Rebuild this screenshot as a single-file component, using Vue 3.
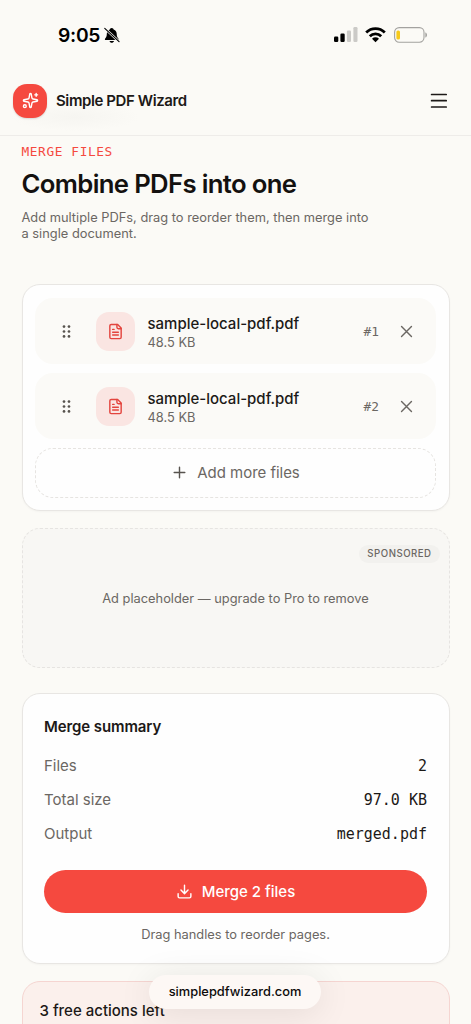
<script setup>
const files = [
  { id: 1, name: 'sample-local-pdf.pdf', size: '48.5 KB' },
  { id: 2, name: 'sample-local-pdf.pdf', size: '48.5 KB' },
]
const summary = [
  { label: 'Files', value: '2' },
  { label: 'Total size', value: '97.0 KB' },
  { label: 'Output', value: 'merged.pdf' },
]
</script>

<template>
  <div class="screen">
    <header class="top">
      <div class="status">
        <div class="time">
          <span>9:05</span>
          <svg class="bell" width="16" height="17" viewBox="0 0 17 18">
            <path d="M8.2 1C6.9 1 6.3 1.8 6.2 2.5C3.9 3.2 3 5 3 7.2C3 10 2.2 11.2 1.1 12.4C.7 13.2 1 13.8 1.8 13.8H14.7C15.5 13.8 15.8 13.2 15.4 12.4C14.2 11.2 13.5 10 13.5 7.2C13.5 5 12.5 3.2 10.2 2.5C10.1 1.8 9.5 1 8.2 1ZM5.8 14.8C6.2 16.1 7.1 16.7 8.2 16.7S10.3 16.1 10.7 14.8Z" fill="#000" />
            <path d="M.8 1.4L16 15.6" stroke="#fbfaf6" stroke-width="2.6" />
            <path d="M.8 1.4L16 15.6" stroke="#000" stroke-width="1.2" stroke-linecap="round" />
          </svg>
        </div>
        <div class="signals">
          <svg width="24" height="16" viewBox="0 0 24 16">
            <rect x="0" y="9.5" width="4.3" height="5.5" rx="1.2" />
            <rect x="6.4" y="6.5" width="4.3" height="8.5" rx="1.2" />
            <rect x="12.9" y="3.5" width="4.1" height="11.5" rx="1.2" fill="#cbcac7" />
            <rect x="19.4" y="0" width="4.1" height="15" rx="1.2" fill="#cbcac7" />
          </svg>
          <svg class="wifi" width="21" height="16" viewBox="0 0 21 16" fill="none" stroke="#000" stroke-width="2.8">
            <path d="M1.2 5.4C6.4.3 14.6.3 19.8 5.4" />
            <path d="M4.8 9.2C8 6 13 6 16.2 9.2" />
            <path d="M7 11.7C9 9.9 12 9.9 14 11.7L10.5 15.2Z" fill="#000" stroke="none" />
          </svg>
          <svg class="battery" width="34" height="16" viewBox="0 0 34 16">
            <rect x=".6" y=".6" width="29.4" height="14.6" rx="4.6" fill="none" stroke="#a3a29f" stroke-width="1.1" />
            <rect x="2.4" y="3.4" width="3.6" height="9" rx="1.5" fill="#f7ca1a" />
            <path d="M31.3 5.4C33.6 6 33.6 9.8 31.3 10.4Z" fill="#a3a29f" />
          </svg>
        </div>
      </div>
      <div class="nav">
        <div class="logo">
          <svg width="17" height="17" viewBox="0 0 24 24" fill="none" stroke="#fff" stroke-width="2" stroke-linecap="round" stroke-linejoin="round">
            <path d="M11.017 2.814a1 1 0 0 1 1.966 0l1.051 5.558a2 2 0 0 0 1.594 1.594l5.558 1.051a1 1 0 0 1 0 1.966l-5.558 1.051a2 2 0 0 0-1.594 1.594l-1.051 5.558a1 1 0 0 1-1.966 0l-1.051-5.558a2 2 0 0 0-1.594-1.594l-5.558-1.051a1 1 0 0 1 0-1.966l5.558-1.051a2 2 0 0 0 1.594-1.594z" />
            <path d="M20 2v4M22 4h-4" />
            <circle cx="4" cy="20" r="2" />
          </svg>
        </div>
        <span class="brand">Simple PDF Wizard</span>
        <svg class="menu" width="22" height="22" viewBox="0 0 22 22" fill="none" stroke="#1c1917" stroke-width="1.7" stroke-linecap="round">
          <path d="M3.6 4.5h14.6M3.6 10.7h14.6M3.6 17h14.6" />
        </svg>
      </div>
    </header>

    <main>
      <p class="eyebrow">MERGE FILES</p>
      <h1>Combine PDFs into one</h1>
      <p class="lead">Add multiple PDFs, drag to reorder them, then merge into<br />a single document.</p>

      <section class="card list">
        <div v-for="file in files" :key="file.id" class="file">
          <svg class="grip" width="17" height="17" viewBox="0 0 24 24" fill="#57534e">
            <circle cx="8.5" cy="5" r="1.9" /><circle cx="15.5" cy="5" r="1.9" />
            <circle cx="8.5" cy="12" r="1.9" /><circle cx="15.5" cy="12" r="1.9" />
            <circle cx="8.5" cy="19" r="1.9" /><circle cx="15.5" cy="19" r="1.9" />
          </svg>
          <div class="thumb">
            <svg width="17" height="17" viewBox="0 0 24 24" fill="none" stroke="#e3453e" stroke-width="2" stroke-linecap="round" stroke-linejoin="round">
              <path d="M15 2H6a2 2 0 0 0-2 2v16a2 2 0 0 0 2 2h12a2 2 0 0 0 2-2V7Z" />
              <path d="M14 2v4a2 2 0 0 0 2 2h4M10 9H8M16 13H8M16 17H8" />
            </svg>
          </div>
          <div class="info">
            <div class="name">{{ file.name }}</div>
            <div class="size">{{ file.size }}</div>
          </div>
          <span class="index">#{{ file.id }}</span>
          <svg class="remove" width="17" height="17" viewBox="0 0 24 24" fill="none" stroke="#6b6763" stroke-width="2" stroke-linecap="round">
            <path d="M5 5l14 14M19 5L5 19" />
          </svg>
        </div>
        <div class="add">
          <svg width="17" height="17" viewBox="0 0 24 24" fill="none" stroke="#57534e" stroke-width="2" stroke-linecap="round">
            <path d="M4.5 12h15M12 4.5v15" />
          </svg>
          <span>Add more files</span>
        </div>
      </section>

      <section class="ad">
        <span class="tag">SPONSORED</span>
        <span class="adtext">Ad placeholder — upgrade to Pro to remove</span>
      </section>

      <section class="card summary">
        <h2>Merge summary</h2>
        <div v-for="row in summary" :key="row.label" class="row">
          <span>{{ row.label }}</span>
          <span class="value">{{ row.value }}</span>
        </div>
        <div class="merge">
          <svg width="17" height="17" viewBox="0 0 24 24" fill="none" stroke="#fff" stroke-width="2" stroke-linecap="round" stroke-linejoin="round">
            <path d="M12 15V3M7 10l5 5 5-5M21 15v4a2 2 0 0 1-2 2H5a2 2 0 0 1-2-2v-4" />
          </svg>
          <span>Merge 2 files</span>
        </div>
        <p class="hint">Drag handles to reorder pages.</p>
      </section>

      <section class="quota">3 free actions left</section>
    </main>

    <div class="address">simplepdfwizard.com</div>
  </div>
</template>

<style>
body { margin: 0; background: #fbfaf6; }
</style>

<style scoped>
* { box-sizing: border-box; margin: 0; }
svg { display: block; flex: none; }
.screen {
  position: relative;
  height: 1024px;
  overflow: hidden;
  background: #fbfaf6;
  color: #1c1917;
  font-family: Inter, "Liberation Sans", sans-serif;
  font-size: 15px;
}
.top { height: 136px; border-bottom: 1px solid #eeece9; background: radial-gradient(ellipse 65px 14px at 75px 117px, #f6f5f1, #fbfaf6); }
.status { height: 68px; display: flex; justify-content: space-between; padding: 24px 43px 0 58px; }
.time { display: flex; height: 22px; align-items: center; gap: 4px; color: #000; font-size: 19.3px; font-weight: 600; letter-spacing: -0.3px; }
.signals { display: flex; height: 21px; align-items: center; }
.wifi { margin-left: 7.5px; }
.battery { margin-left: 8px; }
.nav { height: 65px; display: flex; align-items: center; padding: 0 21px 0 13px; }
.logo { width: 34px; height: 34px; border-radius: 14px; background: #f5493f; display: grid; place-items: center; box-shadow: 0 1px 2px #0002; }
.brand { flex: 1; margin-left: 9px; font-weight: 600; letter-spacing: -0.4px; }
main { padding: 0 21.5px; }
.eyebrow { padding-top: 7px; font: 12.8px/17px "DejaVu Sans Mono", monospace; letter-spacing: 0.6px; color: #f5493f; }
h1 { margin-top: 7px; font-size: 25.7px; line-height: 34px; font-weight: 600; letter-spacing: -0.65px; color: #14110f; }
.lead { margin-top: 9px; font-size: 12.85px; line-height: 16px; color: #6b6763; }
.card { border: 1px solid #e8e6e3; border-radius: 18px; background: #fefefe; box-shadow: 0 1px 2px #00000008; }
.list { margin-top: 42px; height: 227px; padding: 12.5px; display: flex; flex-direction: column; gap: 8.5px; }
.file { height: 66.5px; flex: none; border-radius: 18px; background: #fbfaf7; display: flex; align-items: center; padding: 1px 21px 0 22.5px; }
.thumb { width: 39px; height: 39px; margin-left: 21px; border-radius: 13px; background: #fae5e2; display: grid; place-items: center; }
.info { flex: 1; margin-left: 13px; }
.name { font-weight: 500; line-height: 20px; margin-top: 3px; }
.size { font-size: 12.85px; line-height: 17px; color: #6b6763; }
.index { font: 12.85px "DejaVu Sans Mono", monospace; color: #6b6763; margin-top: 1px; }
.remove { margin-left: 19px; }
.add { flex: 1; border: 1px dashed #e6e4e1; border-radius: 18px; display: flex; align-items: center; justify-content: center; gap: 9px; color: #6b6763; letter-spacing: -0.03px; }
.ad { position: relative; margin-top: 17px; height: 140px; border: 1px dashed #e6e4e1; border-radius: 18px; background: #f8f7f4; display: flex; align-items: center; justify-content: center; color: #6b6763; font-size: 12.85px; }
.tag { position: absolute; top: 16px; right: 9px; height: 18px; padding: 0 8px; border-radius: 9px; background: #f2f1ee; font-size: 9.65px; line-height: 18px; font-weight: 500; letter-spacing: 0.5px; }
.summary { margin-top: 25px; height: 271px; padding: 21px 21.5px; }
h2 { font-size: 15px; line-height: 24px; font-weight: 600; margin-bottom: 9px; letter-spacing: -0.1px; }
.row { height: 34.3px; display: flex; align-items: center; justify-content: space-between; color: #6b6763; }
.value { font-family: "DejaVu Sans Mono", monospace; color: #1c1917; padding-top: 1px; }
.merge { margin-top: 19px; height: 43px; border-radius: 22px; background: #f5493f; color: #fff; font-weight: 500; display: flex; align-items: center; justify-content: center; gap: 9px; }
.hint { margin-top: 13px; text-align: center; font-size: 12.85px; line-height: 17px; color: #6b6763; }
.quota { margin-top: 17px; height: 100px; padding: 18px 17px; border: 1px solid #f5d5d1; border-radius: 18px; background: #fbf0ec; font-weight: 500; line-height: 21px; }
.address { position: absolute; left: 149px; top: 975px; width: 172px; height: 34px; border-radius: 17px; background: #fdf8f5; color: #0c0a09; font-size: 12.85px; font-weight: 500; line-height: 34px; text-align: center; box-shadow: 0 4px 35px #00000018; }
</style>
